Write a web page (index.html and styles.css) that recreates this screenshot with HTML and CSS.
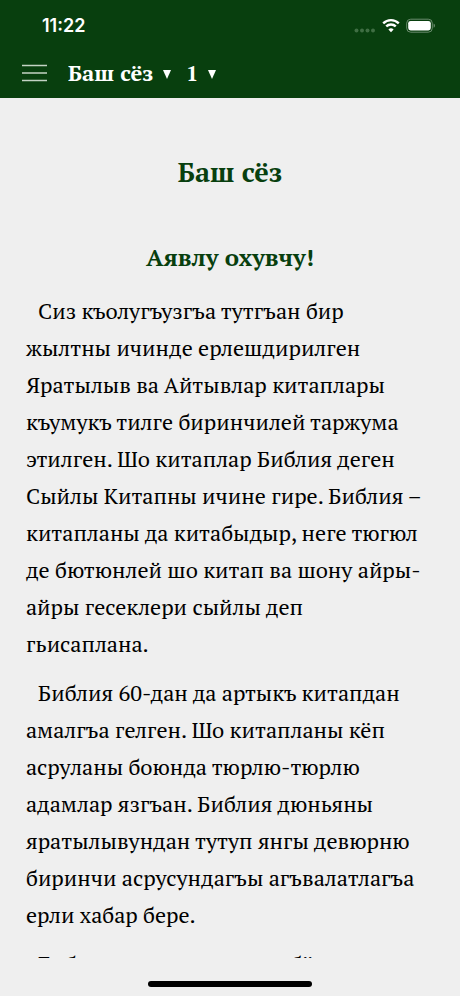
FILE: index.html
```
<!DOCTYPE html>
<html lang="kum">
<head>
  <meta charset="UTF-8">
  <meta name="viewport" content="width=device-width, initial-scale=1.0">
  <title>Баш сёз</title>
  <link rel="stylesheet" href="styles.css">
</head>

<body>
  <header class="header">
    <div class="status">
      <span class="time">11:22</span>
      <div class="status-icons">
        <svg class="signal" width="22" height="18" viewBox="0 0 22 18" aria-hidden="true">
          <circle cx="2.5" cy="13.5" r="2"/>
          <circle cx="8" cy="13.5" r="2"/>
          <circle cx="13.5" cy="13.5" r="2"/>
          <circle cx="19" cy="13.5" r="2"/>
        </svg>
        <svg class="wifi" width="18" height="18" viewBox="0 0 18 18" aria-hidden="true">
          <path d="M1.2 6.3a11.2 11.2 0 0 1 15.6 0"/>
          <path d="M4.2 9.4a6.9 6.9 0 0 1 9.6 0"/>
          <path class="wifi-dot" d="M9 15.2 6.4 12.5a3.8 3.8 0 0 1 5.2 0z"/>
        </svg>
        <svg class="battery" width="30" height="18" viewBox="0 0 30 18" aria-hidden="true">
          <rect class="battery-case" x="0.7" y="2.2" width="25.6" height="13" rx="4"/>
          <rect x="2.2" y="3.9" width="22.6" height="9.6" rx="2.4"/>
          <path class="battery-cap" d="M27.6 6.6v4.2a2.3 2.3 0 0 0 0-4.2z"/>
        </svg>
      </div>
    </div>
    <nav class="toolbar">
      <button class="menu" type="button" aria-label="Меню">
        <svg width="26" height="18" viewBox="0 0 26 18" aria-hidden="true">
          <path d="M0 1.5h25M0 9h25M0 16.5h25"/>
        </svg>
      </button>
      <div class="picker">
        <select aria-label="Китап">
          <option>Баш сёз</option>
        </select>
        <span class="arrow"></span>
      </div>
      <div class="picker">
        <select aria-label="Бап">
          <option>1</option>
        </select>
        <span class="arrow"></span>
      </div>
    </nav>
  </header>

  <main class="reader">
    <h1>Баш сёз</h1>
    <h2>Аявлу охувчу!</h2>
    <p>Сиз къолугъузгъа тутгъан бир жылтны ичинде ерлешдирилген Яратылыв ва Айтывлар китаплары къумукъ тилге биринчилей таржума этилген. Шо китаплар Библия деген Сыйлы Китапны ичине гире. Библия – китапланы да китабыдыр, неге тюгюл де бютюнлей шо китап ва шону айры-айры гесеклери сыйлы деп гьисаплана.</p>
    <p>Библия 60-дан да артыкъ китапдан амалгъа гелген. Шо китапланы кёп асруланы боюнда тюрлю-тюрлю адамлар язгъан. Библия дюньяны яратылывундан тутуп янгы девюрню биринчи асрусундагъы агъвалатлагъа ерли хабар бере.</p>
    <p>Библия эки уллу гесекге бёлюне.</p>
  </main>

  <footer class="home">
    <div class="home-bar"></div>
  </footer>
</body>

</html>
```
FILE: styles.css
```
* {
  box-sizing: border-box;
}
body {
  display: flex;
  flex-direction: column;
  height: 100vh;
  margin: 0;
  background-color: #efefef;
  color: #000;
  font-family: "PT Serif", "Liberation Serif", serif;
}
.header {
  flex-shrink: 0;
  background-color: #083f0e;
  color: #fff;
}
.status {
  display: flex;
  justify-content: space-between;
  align-items: center;
  height: 50px;
  padding: 0 24px 0 42px;
}
.time {
  font-family: Inter, sans-serif;
  font-size: 18px;
  font-weight: 600;
}
.status-icons {
  display: flex;
  gap: 6px;
  padding-top: 2px;
}
.status-icons svg {
  fill: #fff;
}
.status-icons .signal {
  fill: #3f6e43;
}
.wifi path {
  fill: none;
  stroke: #fff;
  stroke-width: 2.4;
}
.wifi .wifi-dot {
  fill: #fff;
  stroke: none;
}
.battery .battery-case {
  fill: none;
  stroke: #6b8c6e;
}
.battery .battery-cap {
  fill: #6b8c6e;
}
.toolbar {
  display: flex;
  align-items: center;
  height: 48px;
  padding: 0 22px 2px;
}
.menu {
  display: flex;
  margin-right: 20px;
  padding: 0;
  border: none;
  background: none;
  cursor: pointer;
}
.menu path {
  fill: none;
  stroke: #c3d3c4;
  stroke-width: 1.4;
}
.picker {
  position: relative;
  margin-right: 12px;
}
.picker select {
  appearance: none;
  margin: 0;
  padding: 0 20px 0 0;
  border: none;
  background: none;
  color: #fff;
  font-family: inherit;
  font-size: 22px;
  font-weight: bold;
  line-height: 28px;
}
.arrow {
  position: absolute;
  right: 3px;
  top: 11px;
  border-left: 4px solid transparent;
  border-right: 4px solid transparent;
  border-top: 9px solid #fff;
  pointer-events: none;
}
.reader {
  flex: 1;
  min-height: 0;
  padding: 56px 34px 0 26px;
  overflow-y: auto;
  scrollbar-width: none;
}
h1, h2 {
  margin: 0 -8px 0 0;
  color: #083f0e;
  text-align: center;
  line-height: 37px;
}
h1 {
  margin-bottom: 48px;
  font-size: 27px;
}
h2 {
  margin-bottom: 16px;
  font-size: 24px;
}
p {
  margin: 0 0 12px;
  font-size: 22px;
  line-height: 37px;
  text-indent: 12px;
}
.home {
  display: flex;
  flex-shrink: 0;
  justify-content: center;
  height: 38px;
  padding-top: 23px;
}
.home-bar {
  width: 164px;
  height: 6px;
  border-radius: 3px;
  background-color: #000;
}
```
